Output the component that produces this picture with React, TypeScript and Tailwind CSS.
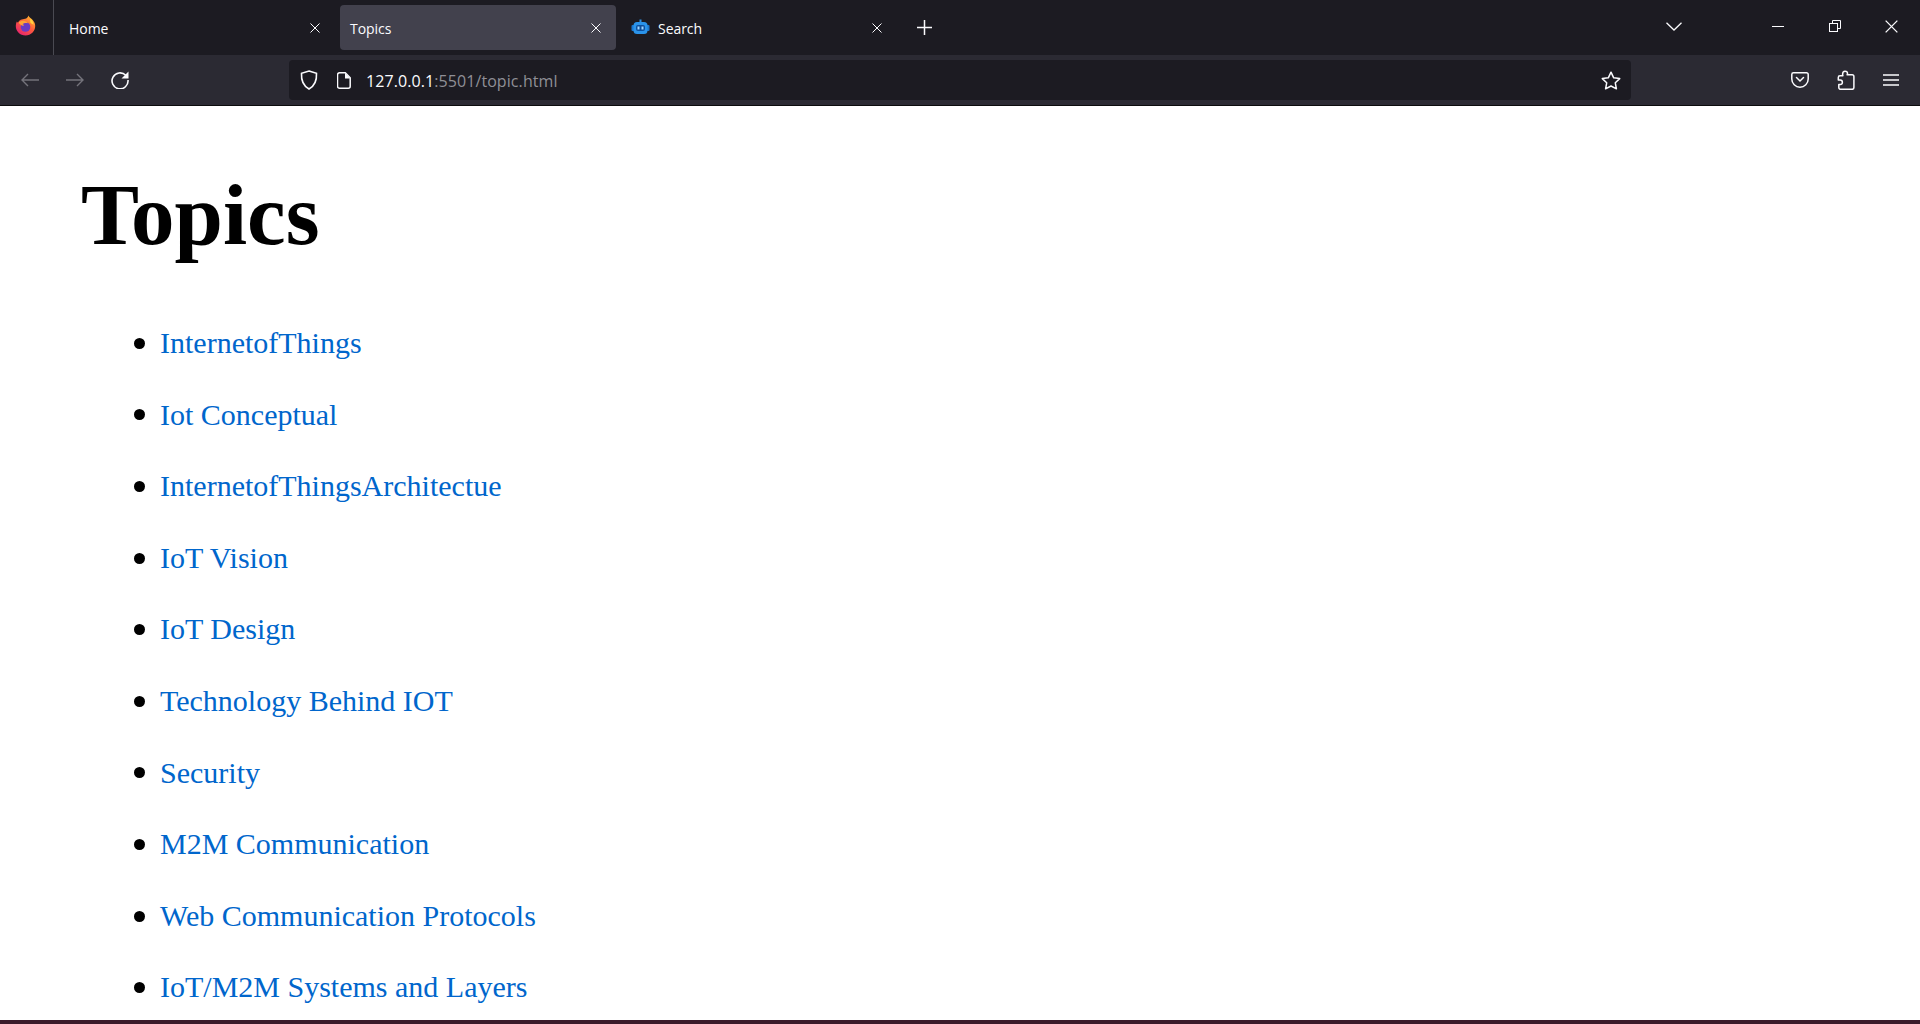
import React from 'react';

const topics = [
  'InternetofThings',
  'Iot Conceptual',
  'InternetofThingsArchitectue',
  'IoT Vision',
  'IoT Design',
  'Technology Behind IOT',
  'Security',
  'M2M Communication',
  'Web Communication Protocols',
  'IoT/M2M Systems and Layers',
];

const FirefoxLogo = () => (
  <svg width="21" height="21" viewBox="0 0 21 21">
    <defs>
      <linearGradient id="ffBody" x1="0.8" y1="0.1" x2="0.2" y2="0.95">
        <stop offset="0" stopColor="#ffb02e" />
        <stop offset="0.45" stopColor="#ff5a3c" />
        <stop offset="1" stopColor="#e6246e" />
      </linearGradient>
    </defs>
    <path d="M13.5 0.5c.4 2 2.6 2.6 4.2 4.6 1.6 2 2.5 3.6 2.5 6 0 5.3-4.2 9.4-9.7 9.4C5 20.5.8 16.300.8 11c0-1.700.3-3.200 1-4.600.4.700.8 1.100 1.300 1.400.4-1.500 1.400-2.500 2.700-3.100 2.500-1 6.500 0 7.700-4.200z" fill="url(#ffBody)" />
    <path d="M15.500 3.500c1.800 1.700 3 3.800 3.100 6.300l-3-1.800c-.7-1.700-.5-3-.1-4.500z" fill="#ffd23f" />
    <circle cx="10.500" cy="12" r="4.800" fill="#6a3bc4" />
    <path d="M3.500 7.500c2-1.800 5-2.300 7.500-1 1 .5 1.500 1 2 1.800-2-.6-4.500-.2-5.500 1.200 1.200 0 1.500.5 1.500 1-1.500.4-3 .2-5.500-3z" fill="#ffa436" />
  </svg>
);

const RobotIcon = () => (
  <svg width="19" height="17" viewBox="0 0 19 17">
    <rect x="8.500" y="0.500" width="2" height="3" fill="#2f8fe0" />
    <rect x="0.500" y="6" width="3" height="6" rx="1" fill="#1a78d0" />
    <rect x="15.500" y="6" width="3" height="6" rx="1" fill="#1a78d0" />
    <rect x="2.500" y="3" width="14" height="12" rx="3.500" fill="#2a93ea" />
    <rect x="5" y="6" width="9" height="6" rx="2" fill="#0d4f9c" />
    <rect x="6.500" y="7.500" width="2" height="3" fill="#9fd6ff" />
    <rect x="10.500" y="7.500" width="2" height="3" fill="#9fd6ff" />
  </svg>
);

const CloseX = ({ size = 10, color = '#fbfbfe' }: { size?: number; color?: string }) => (
  <svg width={size} height={size} viewBox="0 0 10 10" fill="none" stroke={color} strokeWidth="1">
    <path d="M0.500 0.500l9 9M9.500 0.500l-9 9" />
  </svg>
);

const Tab = ({ title, active, icon }: { title: string; active?: boolean; icon?: React.ReactNode }) => (
  <div
    className={`w-[276px] h-[45px] mr-[5px] rounded-[4px] flex items-center pl-[10px] pr-[15px] text-[14px] text-[#fbfbfe] ${
      active ? 'bg-[#42414d]' : ''
    }`}
  >
    {icon && <span className="flex mr-[6px] ml-[2px] -translate-x-[2px]">{icon}</span>}
    <span className="flex-1 pt-[1px]">{title}</span>
    <CloseX />
  </div>
);

const ToolbarIcon = ({ children, className }: { children: React.ReactNode; className?: string }) => (
  <span className={`flex items-center justify-center ${className ?? ''}`}>{children}</span>
);

const App: React.FC = () => {
  return (
    <div className="h-screen flex flex-col overflow-hidden bg-white">
      <div className="h-[55px] shrink-0 bg-[#1c1b22] flex font-['Open_Sans',sans-serif] tracking-[-0.05px]">
        <div className="w-[54px] h-full border-r border-[#4a4a52] flex items-center justify-center pb-[2px] mr-[5px]">
          <span className="flex -translate-x-[1px] -translate-y-[1px]">
            <FirefoxLogo />
          </span>
        </div>
        <div className="flex items-start pt-[5px]">
          <Tab title="Home" />
          <Tab title="Topics" active />
          <Tab title="Search" icon={<RobotIcon />} />
        </div>
        <div className="flex items-center pb-[1px] ml-[15px]">
          <svg width="15" height="15" viewBox="0 0 15 15" stroke="#fbfbfe" strokeWidth="1.500" fill="none">
            <path d="M7.500 0v15M0 7.500h15" />
          </svg>
        </div>
        <div className="flex-1" />
        <div className="flex items-center pb-[3px]">
          <svg width="16" height="9" viewBox="0 0 16 9" fill="none" stroke="#fbfbfe" strokeWidth="1.300">
            <path d="M0.500 0.800L8 8l7.500-7.200" />
          </svg>
          <span className="w-[90px]" />
          <span className="block w-[12px] h-[1px] bg-[#fbfbfe]" />
          <span className="w-[45px]" />
          <svg width="12" height="12" viewBox="0 0 12 12" fill="none" stroke="#fbfbfe" strokeWidth="1">
            <rect x="0.500" y="3.500" width="8" height="8" />
            <path d="M3.500 3.500v-3h8v8h-3" />
          </svg>
          <span className="w-[44px]" />
          <CloseX size={13} />
          <span className="w-[22px]" />
        </div>
      </div>

      <div className="h-[50px] shrink-0 bg-[#2b2a33] flex items-center font-['Open_Sans',sans-serif]">
        <ToolbarIcon className="ml-[21px] w-[18px]">
          <svg width="18" height="14" viewBox="0 0 18 14" fill="none" stroke="#74737b" strokeWidth="1.400">
            <path d="M18 7H1M7 1L1 7l6 6" />
          </svg>
        </ToolbarIcon>
        <ToolbarIcon className="ml-[27px] w-[18px]">
          <svg width="18" height="14" viewBox="0 0 18 14" fill="none" stroke="#74737b" strokeWidth="1.400">
            <path d="M0 7h17M11 1l6 6-6 6" />
          </svg>
        </ToolbarIcon>
        <ToolbarIcon className="ml-[27px] w-[18px]">
          <svg width="18" height="18" viewBox="0 0 18 18" fill="none">
            <path d="M14.800 4.300A8 8 0 1 0 17 9" stroke="#fbfbfe" strokeWidth="1.600" />
            <path d="M17.500 0.500v7h-7z" fill="#fbfbfe" />
          </svg>
        </ToolbarIcon>

        <div className="ml-[160px] w-[1342px] h-[40px] bg-[#1c1b22] rounded-[4px] flex items-center">
          <ToolbarIcon className="ml-[11px]">
            <svg width="18" height="20" viewBox="0 0 18 20" fill="none" stroke="#fbfbfe" strokeWidth="1.600">
              <path d="M9 1l7.500 2.300c.4 7-1.500 12.500-7.500 15.700C3 15.800 1.100 10.300 1.500 3.300z" />
            </svg>
          </ToolbarIcon>
          <ToolbarIcon className="ml-[19px]">
            <svg width="14" height="17" viewBox="0 0 14 17" fill="none">
              <path d="M2.500 0.800h5.800l4.900 4.900v8.500a2 2 0 0 1-2 2h-8.700a2 2 0 0 1-2-2V2.800a2 2 0 0 1 2-2z" stroke="#fbfbfe" strokeWidth="1.500" />
              <path d="M8 1v5.500h5.200z" fill="#fbfbfe" />
            </svg>
          </ToolbarIcon>
          <div className="ml-[15px] pt-[2px] text-[16px] tracking-[0.08px] text-[#8f8f96] flex-1">
            <span className="text-[#fbfbfe]">127.0.0.1</span>:5501/topic.html
          </div>
          <ToolbarIcon className="mr-[10px]">
            <svg width="20" height="19" viewBox="0 0 20 19" fill="none" stroke="#fbfbfe" strokeWidth="1.500" strokeLinejoin="round">
              <path d="M10 1.200l2.700 5.600 6 .8-4.400 4.200 1.100 6L10 15l-5.400 2.800 1.100-6L1.300 7.600l6-.8z" />
            </svg>
          </ToolbarIcon>
        </div>

        <ToolbarIcon className="ml-[160px] w-[18px]">
          <svg width="18" height="16" viewBox="0 0 18 16" fill="none" stroke="#fbfbfe" strokeWidth="1.500">
            <path d="M2.500 0.800h13a1.700 1.700 0 0 1 1.700 1.700v4.500a8.200 8.200 0 0 1-16.400 0V2.500A1.700 1.700 0 0 1 2.500 0.800z" />
            <path d="M5.500 5.500L9 9l3.500-3.500" strokeLinecap="round" />
          </svg>
        </ToolbarIcon>
        <ToolbarIcon className="ml-[28px] w-[18px]">
          <svg width="18" height="20" viewBox="0 0 18 20" fill="none" stroke="#fbfbfe" strokeWidth="1.500" strokeLinejoin="round">
            <path d="M8 1.200c1.600 0 2.500 1 2.500 2.200 0 .6-.2 1-.4 1.400h5c1 0 1.800.8 1.800 1.800v11c0 1-.8 1.700-1.800 1.700H3.500c-1 0-1.700-.7-1.700-1.700v-3h1.400c1.300 0 2.200-1 2.200-2.300S4.500 10 3.200 10H1.300V7.500c0-1 .8-1.700 1.700-1.700h2.900c-.2-.5-.3-1-.3-1.500C5.600 2.500 6.500 1.200 8 1.200z" />
          </svg>
        </ToolbarIcon>
        <ToolbarIcon className="ml-[28px] w-[16px]">
          <svg width="16" height="12" viewBox="0 0 16 12" stroke="#fbfbfe" strokeWidth="1.400">
            <path d="M0 1h16M0 6h16M0 11h16" />
          </svg>
        </ToolbarIcon>
      </div>
      <div className="h-[1px] shrink-0 bg-[#0c0c0d]" />

      <main className="flex-1 min-h-0 overflow-hidden font-['Liberation_Serif',serif] text-black pl-[81px]">
        <h1 className="text-[87px] leading-[100px] font-bold mt-[59px] mb-[61px]">Topics</h1>
        <ul className="pl-[53px]">
          {topics.map((topic) => (
            <li key={topic} className="flex items-center gap-[15px] text-[30px] leading-[34.5px] mb-[37.1px]">
              <span className="w-[11px] h-[11px] rounded-full bg-black shrink-0" />
              <a href="#" className="text-[#0066cc]">
                {topic}
              </a>
            </li>
          ))}
        </ul>
      </main>
      <div className="h-[4px] shrink-0 bg-[#3a1a2a]" />
    </div>
  );
};

export default App;
